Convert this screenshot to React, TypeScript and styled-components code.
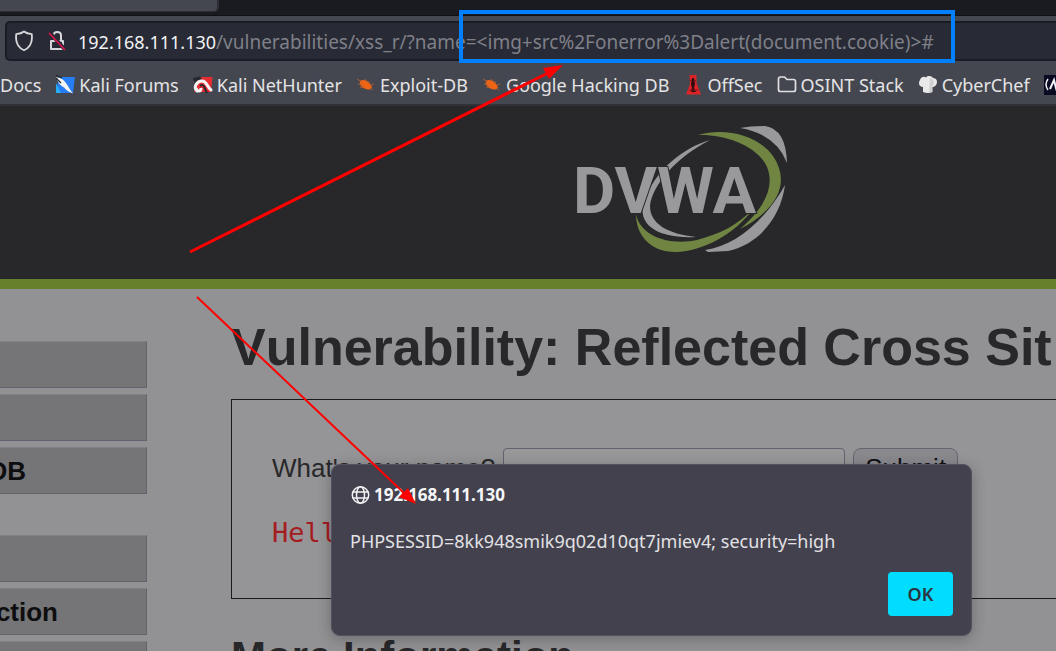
import React from 'react';
import styled, { createGlobalStyle } from 'styled-components';

const GlobalStyle = createGlobalStyle`
  *, *::before, *::after { box-sizing: border-box; }
  body { margin: 0; background: #929294; }
`;

const ui = '"Noto Sans", "Open Sans", sans-serif';
const sans = '"Liberation Sans", Arial, sans-serif';

const Window = styled.div`
  position: relative;
  display: flex;
  flex-direction: column;
  height: 100vh;
  overflow: hidden;
  font-family: ${ui};
`;

const TabStrip = styled.div`
  flex: none;
  height: 16px;
  background: #1a1b20;
  border-bottom: 1px solid #101115;
`;

const ActiveTab = styled.div`
  width: 219px;
  height: 12px;
  background: #44474f;
  border: solid #2d2f36;
  border-width: 0 2px 1px 0;
  border-radius: 0 0 5px 0;
`;

const NavBar = styled.div`
  flex: none;
  padding: 5px 0 0 5px;
  background: #44474f;
`;

const AddressField = styled.div`
  display: flex;
  align-items: center;
  height: 40px;
  padding-left: 7px;
  background: #282a35;
  border: 2px solid #1b1c23;
  border-right: 0;
  border-radius: 5px 0 0 5px;
  color: #7f8088;
  font-size: 19px;
  line-height: 28px;
  white-space: nowrap;
`;

const AddressIcons = styled.div`
  display: flex;
  gap: 13px;
  width: 64px;
`;

const AddressText = styled.div`
  padding-top: 2px;
`;

const Host = styled.span`
  color: #f2f2f4;
  font-size: 18px;
`;

const Bookmarks = styled.nav`
  flex: none;
  display: flex;
  align-items: center;
  gap: 14px;
  height: 45px;
  padding-top: 4px;
  background: #44474f;
  border-bottom: 2px solid #303238;
`;

const Bookmark = styled.a`
  flex: none;
  display: flex;
  align-items: center;
  gap: 4px;
  color: #e4e4e6;
  font-size: 18px;
  line-height: 28px;
  text-decoration: none;
  white-space: nowrap;
`;

const SiteHeader = styled.header`
  flex: none;
  display: flex;
  justify-content: center;
  height: 183px;
  padding: 20px 0 0 314px;
  background: #28282a;
  border-bottom: 10px solid #67802b;
`;

const Page = styled.div`
  flex: 1;
  min-height: 0;
  display: flex;
  background: #929294;
  font-family: ${sans};
  color: #28282a;
`;

const Sidebar = styled.nav`
  flex: none;
  display: flex;
  flex-direction: column;
  gap: 41px;
  width: 147px;
  padding-top: 52px;
`;

const MenuGroup = styled.div`
  display: flex;
  flex-direction: column;
  gap: 6px;
`;

const MenuItem = styled.a<{ $inset?: number }>`
  display: flex;
  align-items: center;
  justify-content: flex-end;
  height: 47px;
  padding-right: ${(p) => p.$inset ?? 0}px;
  background: #757577;
  border: 1px solid #828286;
  border-left: 0;
  border-right-color: #61646f;
  border-bottom-color: #61646f;
  color: #0e0e10;
  font-size: 26px;
  font-weight: bold;
  line-height: 30px;
  text-decoration: none;
`;

const Main = styled.main`
  flex: 1;
  min-width: 0;
  padding: 28px 0 0 84px;
`;

const Title = styled.h1`
  margin: 0 0 22px;
  font-size: 52px;
  font-kerning: none;
  line-height: 60px;
  white-space: nowrap;
`;

const Subtitle = styled.h2`
  margin: 34px 0 0;
  font-size: 42px;
  line-height: 48px;
`;

const Panel = styled.section`
  height: 200px;
  padding: 48px 0 0 40px;
  background: #959597;
  border: 1px solid #1a1a1c;
  border-right: 0;
`;

const NameForm = styled.form`
  display: flex;
  align-items: center;
  font-size: 26px;
  line-height: 38px;
`;

const NameInput = styled.input`
  width: 342px;
  height: 40px;
  margin: 0 8px;
  background: #98989a;
  border: 1px solid #646470;
  border-radius: 4px;
  font: inherit;
`;

const SubmitButton = styled.button`
  width: 105px;
  height: 40px;
  padding: 0;
  background: #89898e;
  border: 1px solid #646470;
  border-radius: 8px;
  color: #0e0e10;
  font: inherit;
`;

const Greeting = styled.pre`
  margin: 28px 0 0;
  color: #a51c20;
  font-family: "DejaVu Sans Mono", monospace;
  font-size: 27px;
  line-height: 34px;
`;

const Dialog = styled.div`
  position: absolute;
  left: 331px;
  top: 464px;
  display: flex;
  flex-direction: column;
  width: 641px;
  height: 172px;
  padding: 16px 18px 19px;
  background: #42414d;
  border: 1px solid #52515e;
  border-radius: 9px;
  box-shadow: 0 3px 14px rgba(20, 20, 30, 0.3);
  color: #e2e2e5;
  font-size: 18px;
  line-height: 28px;
`;

const DialogTitle = styled.div`
  display: flex;
  align-items: center;
  gap: 4px;
  color: #f6f6f8;
  font-size: 17px;
  font-weight: 700;
`;

const DialogText = styled.p`
  margin: 18px 0 0;
  white-space: nowrap;
`;

const OkButton = styled.button`
  align-self: flex-end;
  width: 65px;
  height: 44px;
  margin-top: auto;
  padding: 0;
  background: #00ddff;
  border: 0;
  border-radius: 4px;
  color: #2b3540;
  font: 600 18px/28px ${ui};
`;

const Annotations = styled.svg`
  position: absolute;
  left: 0;
  top: 0;
  pointer-events: none;
`;

const ShieldIcon = () => (
  <svg width="20" height="22" viewBox="0 0 20 22" fill="none" stroke="#d6d6da" strokeWidth="1.8" strokeLinejoin="round">
    <path d="M10 1.5C8 3.2 5 3.9 2.2 4.1C1.7 9 2.3 12.5 4.2 15.4C5.7 17.7 7.8 19.3 10 20.3C12.2 19.3 14.3 17.7 15.8 15.4C17.7 12.5 18.3 9 17.8 4.1C15 3.9 12 3.2 10 1.5Z" />
  </svg>
);

const LockIcon = () => (
  <svg width="20" height="22" viewBox="0 0 20 22" fill="none" strokeLinejoin="round">
    <path d="M4 11H16V19H4Z" stroke="#d6d6da" strokeWidth="2" />
    <path d="M6.500 6V5.500C6.500 0.800 14 0.800 14 5.500V10" stroke="#d6d6da" strokeWidth="2" />
    <path d="M3 3L18 19.500" stroke="#282a35" strokeWidth="4" />
    <path d="M2 3L18 20" stroke="#d8134a" strokeWidth="1.800" />
  </svg>
);

const ForumsIcon = () => (
  <svg width="20" height="20" viewBox="0 0 20 20">
    <path d="M4 2H20L18 18H1Z" fill="#267df4" />
    <path d="M1 8L6 18H1Z" fill="#25adf5" />
    <path d="M1 2C3 3 5 2.500 7 4C10 6 11 8 13 11C14.500 14 16 16 18 18.500C14 17 11 15 9 12.500C6 11 3 8 1 2Z" fill="#f4f4f4" />
    <path d="M1 0.500L7 3M1 3L6 8" stroke="#1c222c" strokeWidth="1.200" />
  </svg>
);

const NetHunterIcon = () => (
  <svg width="20" height="20" viewBox="0 0 20 20">
    <path d="M6 2H19.500L18 17H1L4 8Z" fill="#e52c33" />
    <path d="M0 3L7 1.500L9 4L1 7Z" fill="#252830" />
    <path d="M4 16C0 12 4 6 9 6C14 6 14 12 18 15" fill="none" stroke="#f5f3f3" strokeWidth="3" strokeLinecap="round" />
    <path d="M3 13C4 17 8 17 8 13" fill="none" stroke="#f5f3f3" strokeWidth="3" />
    <path d="M7 11C9 9 11 10 12 14L14 18" fill="none" stroke="#25272e" strokeWidth="2" />
  </svg>
);

const BugIcon = () => (
  <svg width="20" height="20" viewBox="0 0 20 20">
    <path d="M4 6C8 3 14 7 16 12C15 15 12 15 10 14C6 13 3 10 4 6Z" fill="#ee6414" />
    <path d="M1 4L6 7M2 9H7M4 13L8 11M9 4L11 7M13 6V9M15 10L18 9M14 13L17 15" stroke="#c2612c" strokeWidth="0.800" />
  </svg>
);

const OffSecIcon = () => (
  <svg width="20" height="20" viewBox="0 0 20 20">
    <path d="M6.500 0H13.500V8L18 19.500H3L7 9Z" fill="#dc2427" />
    <path d="M9 3H11L12 9L11 13L13 17H8L9 13L8 9Z" fill="#300d11" />
    <path d="M7 5L9 7M13 5L11 7M6 15H15" stroke="#7d1418" strokeWidth="1" />
  </svg>
);

const FolderIcon = () => (
  <svg width="20" height="20" viewBox="0 0 20 20" fill="none" stroke="#e0e0e3" strokeWidth="1.700" strokeLinejoin="round">
    <path d="M3.500 2H7.500L10 4.500H16.500Q18.500 4.500 18.500 6.500V14.500Q18.500 16.500 16.500 16.500H3.500Q1.500 16.500 1.500 14.500V4Q1.500 2 3.500 2Z" />
  </svg>
);

const ChefIcon = () => (
  <svg width="20" height="20" viewBox="0 0 20 20">
    <path d="M5 17V12C1 12 0 8 2 5C3 2 6 1 8 2.500C10 0 14 1 15 3C19 3 20 7 18 10C17 11.500 15.500 12 14.500 12V17Q10 19 5 17Z" fill="#e9e9e9" />
    <path d="M12 3C16 4 17 8 14 12V17L11 17.500Z" fill="#d0d0d0" />
  </svg>
);

const WaveIcon = () => (
  <svg width="20" height="20" viewBox="0 0 20 20">
    <path d="M0 0H20V20H0Z" fill="#0b0a23" />
    <path d="M4 4Q0 9.500 4 15" fill="none" stroke="#f0f0f5" strokeWidth="1.500" />
    <path d="M6 14L10 5L12 13L16 4" fill="none" stroke="#f0f0f5" strokeWidth="2" />
  </svg>
);

const GlobeIcon = () => (
  <svg width="20" height="20" viewBox="0 0 20 20" fill="none" stroke="#f2f2f4" strokeWidth="1.500">
    <circle cx="10.500" cy="10" r="8.200" />
    <ellipse cx="10.500" cy="10" rx="4" ry="8.200" />
    <path d="M2.500 7H18.500M2.500 13H18.500" />
  </svg>
);

const DvwaLogo = () => (
  <svg width="250" height="140" viewBox="0 0 250 140" role="img" aria-label="DVWA">
    <path d="M150 14C122 22 95 45 84 75C76 100 100 113 136 111C108 108 90 98 90 80C92 60 115 32 150 14Z" fill="#99999b" />
    <path d="M180 2Q190 0 205 0Q226 3 227 37Q216 8 180 2Z" fill="#99999b" />
    <path d="M225 59C221 90 200 118 168 125L148 126L145 124C175 120 205 95 225 59Z" fill="#99999b" />
    <path d="M138 9C165 1 198 9 213 30C230 55 220 82 180 103C205 82 215 60 207 41C198 20 165 8 138 9Z" fill="#708542" />
    <path d="M76 88C80 110 109 120 137 114C160 108 178 99 194 82C174 109 143 125 116 126C89 126 76 108 76 88Z" fill="#708542" />
    <text
      x="13"
      y="87"
      fontFamily="Roboto, sans-serif"
      fontWeight="bold"
      fontSize="65"
      fill="#99999b"
      stroke="#28282a"
      strokeWidth="2"
      paintOrder="stroke"
    >
      DVWA
    </text>
  </svg>
);

const bookmarks = [
  { label: 'Docs' },
  { label: 'Kali Forums', Icon: ForumsIcon },
  { label: 'Kali NetHunter', Icon: NetHunterIcon },
  { label: 'Exploit-DB', Icon: BugIcon },
  { label: 'Google Hacking DB', Icon: BugIcon },
  { label: 'OffSec', Icon: OffSecIcon },
  { label: 'OSINT Stack', Icon: FolderIcon },
  { label: 'CyberChef', Icon: ChefIcon },
  { label: '', Icon: WaveIcon },
];

export default function App() {
  return (
    <Window>
      <GlobalStyle />
      <TabStrip>
        <ActiveTab />
      </TabStrip>
      <NavBar>
        <AddressField>
          <AddressIcons>
            <ShieldIcon />
            <LockIcon />
          </AddressIcons>
          <AddressText>
            <Host>192.168.111.130</Host>
            /vulnerabilities/xss_r/?name=&lt;img+src%2Fonerror%3Dalert(document.cookie)&gt;#
          </AddressText>
        </AddressField>
      </NavBar>
      <Bookmarks>
        {bookmarks.map(({ label, Icon }, i) => (
          <Bookmark href="#" key={i}>
            {Icon && <Icon />}
            {label}
          </Bookmark>
        ))}
      </Bookmarks>
      <SiteHeader>
        <DvwaLogo />
      </SiteHeader>
      <Page>
        <Sidebar>
          <MenuGroup>
            <MenuItem href="#" />
            <MenuItem href="#" />
            <MenuItem href="#" $inset={120}>DB</MenuItem>
          </MenuGroup>
          <MenuGroup>
            <MenuItem href="#" />
            <MenuItem href="#" $inset={88}>ction</MenuItem>
            <MenuItem href="#" />
          </MenuGroup>
        </Sidebar>
        <Main>
          <Title>Vulnerability: Reflected Cross Sit</Title>
          <Panel>
            <NameForm>
              <label htmlFor="name">What's your name?</label>
              <NameInput id="name" />
              <SubmitButton type="button">Submit</SubmitButton>
            </NameForm>
            <Greeting>Hello</Greeting>
          </Panel>
          <Subtitle>More Information</Subtitle>
        </Main>
      </Page>
      <Dialog role="alertdialog" aria-label="192.168.111.130">
        <DialogTitle>
          <GlobeIcon />
          192.168.111.130
        </DialogTitle>
        <DialogText>PHPSESSID=8kk948smik9q02d10qt7jmiev4; security=high</DialogText>
        <OkButton>OK</OkButton>
      </Dialog>
      <Annotations width="1056" height="651" viewBox="0 0 1056 651" fill="none">
        <path d="M461 12H953V61H461Z" stroke="#0080ff" strokeWidth="4" />
        <path d="M190 252L548 73" stroke="#ff0000" strokeWidth="3" />
        <path d="M563 65L549 79L543 68Z" fill="#ff0000" />
        <path d="M197 297L405 494" stroke="#ff0000" strokeWidth="2" />
        <path d="M416 504L399 497L408 488Z" fill="#ff0000" />
      </Annotations>
    </Window>
  );
}
